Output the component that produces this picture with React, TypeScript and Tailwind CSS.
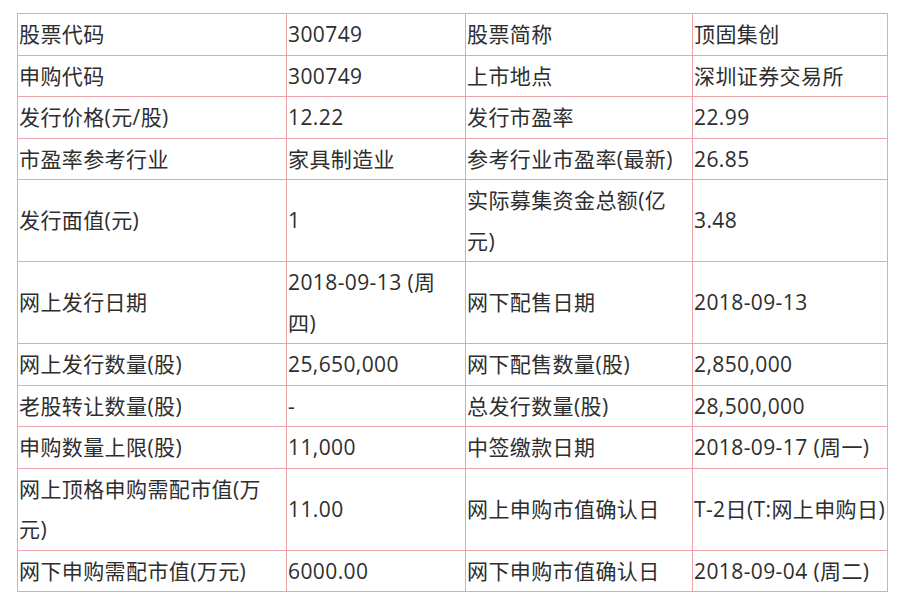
import { Fragment } from 'react';

type Row = {
    label: React.ReactNode;
    value: React.ReactNode;
    label2: React.ReactNode;
    value2: React.ReactNode;
};

const rows: Row[] = [
    { label: '股票代码', value: '300749', label2: '股票简称', value2: '顶固集创' },
    { label: '申购代码', value: '300749', label2: '上市地点', value2: '深圳证券交易所' },
    { label: '发行价格(元/股)', value: '12.22', label2: '发行市盈率', value2: '22.99' },
    { label: '市盈率参考行业', value: '家具制造业', label2: '参考行业市盈率(最新)', value2: '26.85' },
    {
        label: '发行面值(元)',
        value: '1',
        label2: (
            <Fragment>
                实际募集资金总额(亿
                <br />
                元)
            </Fragment>
        ),
        value2: '3.48',
    },
    {
        label: '网上发行日期',
        value: (
            <Fragment>
                2018-09-13 (周
                <br />
                四)
            </Fragment>
        ),
        label2: '网下配售日期',
        value2: '2018-09-13',
    },
    { label: '网上发行数量(股)', value: '25,650,000', label2: '网下配售数量(股)', value2: '2,850,000' },
    { label: '老股转让数量(股)', value: '-', label2: '总发行数量(股)', value2: '28,500,000' },
    { label: '申购数量上限(股)', value: '11,000', label2: '中签缴款日期', value2: '2018-09-17 (周一)' },
    {
        label: (
            <Fragment>
                网上顶格申购需配市值(万
                <br />
                元)
            </Fragment>
        ),
        value: '11.00',
        label2: '网上申购市值确认日',
        value2: 'T-2日(T:网上申购日)',
    },
    { label: '网下申购需配市值(万元)', value: '6000.00', label2: '网下申购市值确认日', value2: '2018-09-04 (周二)' },
];

const cell = 'border border-[#f0a3aa] pl-[1px] pr-0 py-0 align-middle leading-[40.5px] whitespace-nowrap overflow-visible';

export default function App() {
    return (
        <div
            className="min-h-[605px] w-[900px] bg-white pl-[17px] pt-[13px] text-[21px] tracking-[0.4px] text-[#2e2e2e]"
            style={{ fontFamily: '"Open Sans", "Noto Sans CJK SC", sans-serif' }}
        >
            <table className="table-fixed border-collapse">
                <colgroup>
                    <col className="w-[269px]" />
                    <col className="w-[179px]" />
                    <col className="w-[227px]" />
                    <col className="w-[195px]" />
                </colgroup>
                <tbody>
                    {rows.map((row, i) => (
                        <tr key={i}>
                            <td className={cell}>{row.label}</td>
                            <td className={cell}>{row.value}</td>
                            <td className={cell}>{row.label2}</td>
                            <td className={cell}>{row.value2}</td>
                        </tr>
                    ))}
                </tbody>
            </table>
        </div>
    );
}
